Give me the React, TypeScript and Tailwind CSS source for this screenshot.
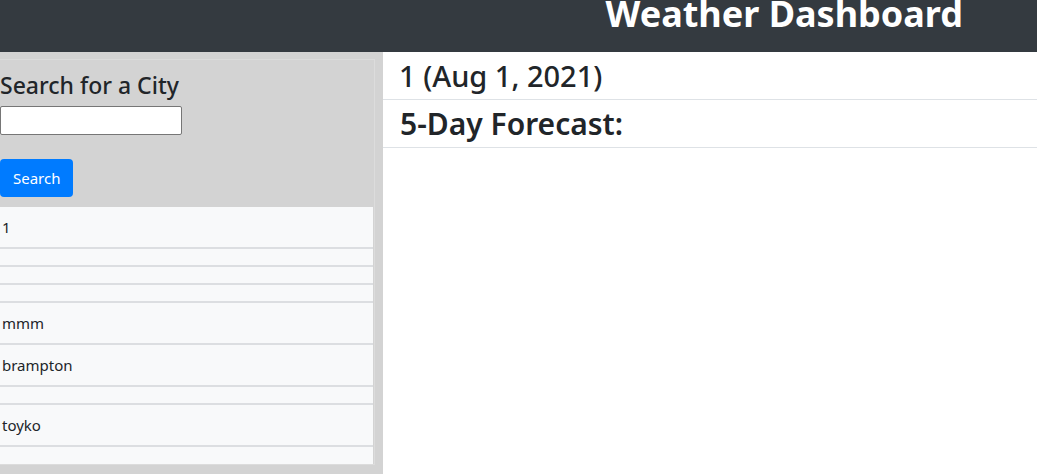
import React from "react";

const cities = ["1", "", "", "", "mmm", "brampton", "", "toyko", ""];

export default function App() {
  return (
    <div
      className="min-h-screen bg-white text-[#212529]"
      style={{ fontFamily: '"Noto Sans", "Open Sans", sans-serif' }}
    >
      <header className="h-[52px] bg-[#343a40] overflow-hidden flex justify-end pr-[74px]">
        <h1 className="text-[36px] leading-[36px] font-bold text-white -mt-[4px]">
          Weather Dashboard
        </h1>
      </header>

      <div className="flex">
        <aside className="w-[383px] bg-[#d3d3d3] pt-[7px] pr-[8px] pb-[9px] min-h-[422px]">
          <div className="border-t border-r border-b border-[#dcdcdc]">
            <div className="pt-[10px] pb-[10px]">
              <h3 className="text-[23px] leading-[30px] font-medium">Search for a City</h3>
              <input
                type="text"
                className="mt-[6px] block w-[182px] h-[29px] bg-white border border-[#767676] rounded-[2px]"
              />
              <button className="mt-[24px] block h-[38px] px-[13px] rounded-[4px] bg-[#007bff] text-white text-[15px]">
                Search
              </button>
            </div>
            <ul className="bg-[#f8f9fa] w-[373px]">
              {cities.map((c, i) => (
                <li
                  key={i}
                  className={
                    c
                      ? "h-[42px] flex items-center px-[2px] text-[15px] border-b-2 border-[#dcdee1]"
                      : i === cities.length - 1
                        ? "h-[17px]"
                        : "h-[18px] border-b-2 border-[#dcdee1]"
                  }
                >
                  {c}
                </li>
              ))}
            </ul>
          </div>
        </aside>

        <main className="flex-1">
          <div className="h-[48px] border-b border-[#dee2e6] pl-[16px] flex items-center">
            <h2 className="text-[29px] font-medium leading-none">1 (Aug 1, 2021)</h2>
          </div>
          <div className="h-[48px] border-b border-[#dee2e6] pl-[17px] flex items-center">
            <h2 className="text-[30px] font-semibold leading-none">5-Day Forecast:</h2>
          </div>
        </main>
      </div>
    </div>
  );
}
